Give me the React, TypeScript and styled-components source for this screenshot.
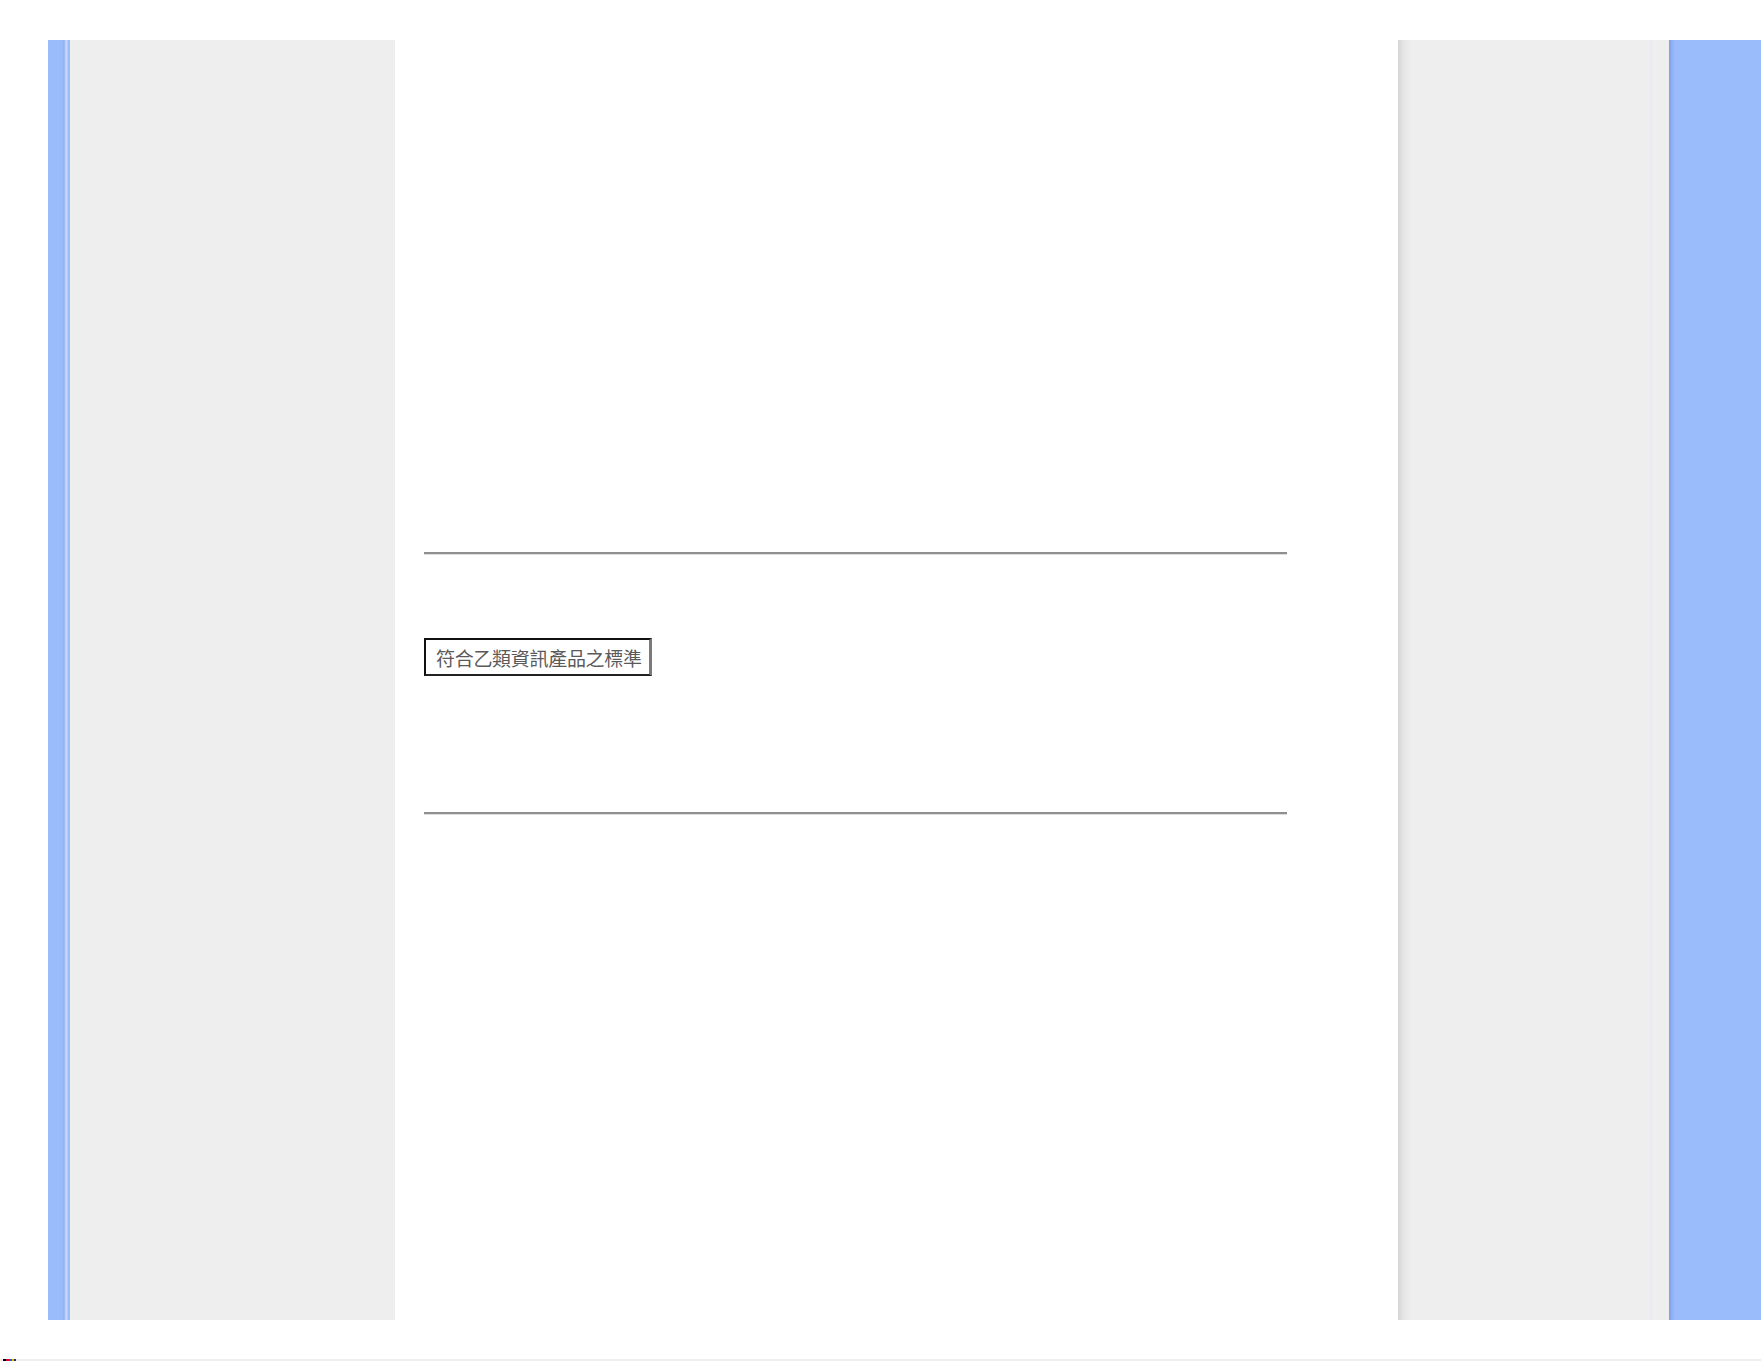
import React from "react";
import styled, { createGlobalStyle } from "styled-components";

const Global = createGlobalStyle`
  html, body { margin: 0; padding: 0; background: #ffffff; }
  body { font-family: "Liberation Sans", "Noto Sans CJK TC", sans-serif; }
`;

const Page = styled.div`
  width: 1761px;
  height: 1361px;
  padding-top: 40px;
  box-sizing: border-box;
  display: flex;
  flex-direction: column;
`;

const Columns = styled.div`
  display: flex;
  height: 1280px;
`;

const Spacer = styled.div<{ $w: number }>`
  width: ${(p) => p.$w}px;
  flex: none;
`;

const LeftStrip = styled.div`
  width: 22px;
  flex: none;
  background: linear-gradient(
    to right,
    #9bbcfa 0px,
    #9bbcfa 14px,
    #90b0f2 16px,
    #c9d9fc 18px,
    #c9d9fc 19px,
    #9bbcfa 20px,
    #9bbcfa 22px
  );
`;

const LeftNav = styled.div`
  width: 325px;
  flex: none;
  background: #eeeeee;
`;

const Main = styled.main`
  width: 1003px;
  flex: none;
  background: #ffffff;
  padding-left: 29px;
  box-sizing: border-box;
  display: flex;
  flex-direction: column;
`;

const Rule = styled.hr<{ $top: number }>`
  width: 863px;
  margin: ${(p) => p.$top}px 0 0 0;
  height: 0;
  border: none;
  border-top: 2px solid #8f8f8f;
  border-bottom: 1px solid #dedede;
`;

const Badge = styled.div`
  align-self: flex-start;
  margin-top: 83px;
  width: 228px;
  height: 38px;
  box-sizing: border-box;
  border-top: 2px solid #111111;
  border-left: 2px solid #111111;
  border-bottom: 2px solid #222222;
  border-right: 3px solid #7a7a7a;
  display: flex;
  align-items: center;
  padding-left: 10px;
  font-family: "Noto Sans CJK TC", "Noto Sans CJK SC", sans-serif;
  font-size: 19px;
  letter-spacing: -0.3px;
  color: #5a5a5a;
  white-space: nowrap;
`;

const RightNav = styled.div`
  width: 271px;
  flex: none;
  background: linear-gradient(
    to right,
    #d6d6d6 0px,
    #e6e6e6 6px,
    #eeeeee 13px,
    #eeeeee 252px,
    #e4e7f1 253px,
    #eeeeee 254px,
    #eeeeee 271px
  );
`;

const RightStrip = styled.div`
  flex: 1;
  background: linear-gradient(
    to right,
    #7d9de6 0px,
    #8fb1f3 3px,
    #9bbcfa 6px,
    #9bbcfa 100%
  );
`;

const Footer = styled.div`
  margin-top: auto;
  height: 2px;
  background: #eeeeee;
  display: flex;
`;

const FooterMark = styled.div`
  margin-left: 3px;
  width: 13px;
  height: 2px;
  background: linear-gradient(to right, #000 0 3px, #c03 3px 6px, #06c 6px 9px, #fa0 9px 11px, #333 11px 13px);
`;

export default function App() {
  return (
    <>
      <Global />
      <Page>
        <Columns>
          <Spacer $w={48} />
          <LeftStrip />
          <LeftNav />
          <Main>
            <Rule $top={512} />
            <Badge>符合乙類資訊產品之標準</Badge>
            <Rule $top={136} />
          </Main>
          <RightNav />
          <RightStrip />
        </Columns>
        <Footer>
          <FooterMark />
        </Footer>
      </Page>
    </>
  );
}
